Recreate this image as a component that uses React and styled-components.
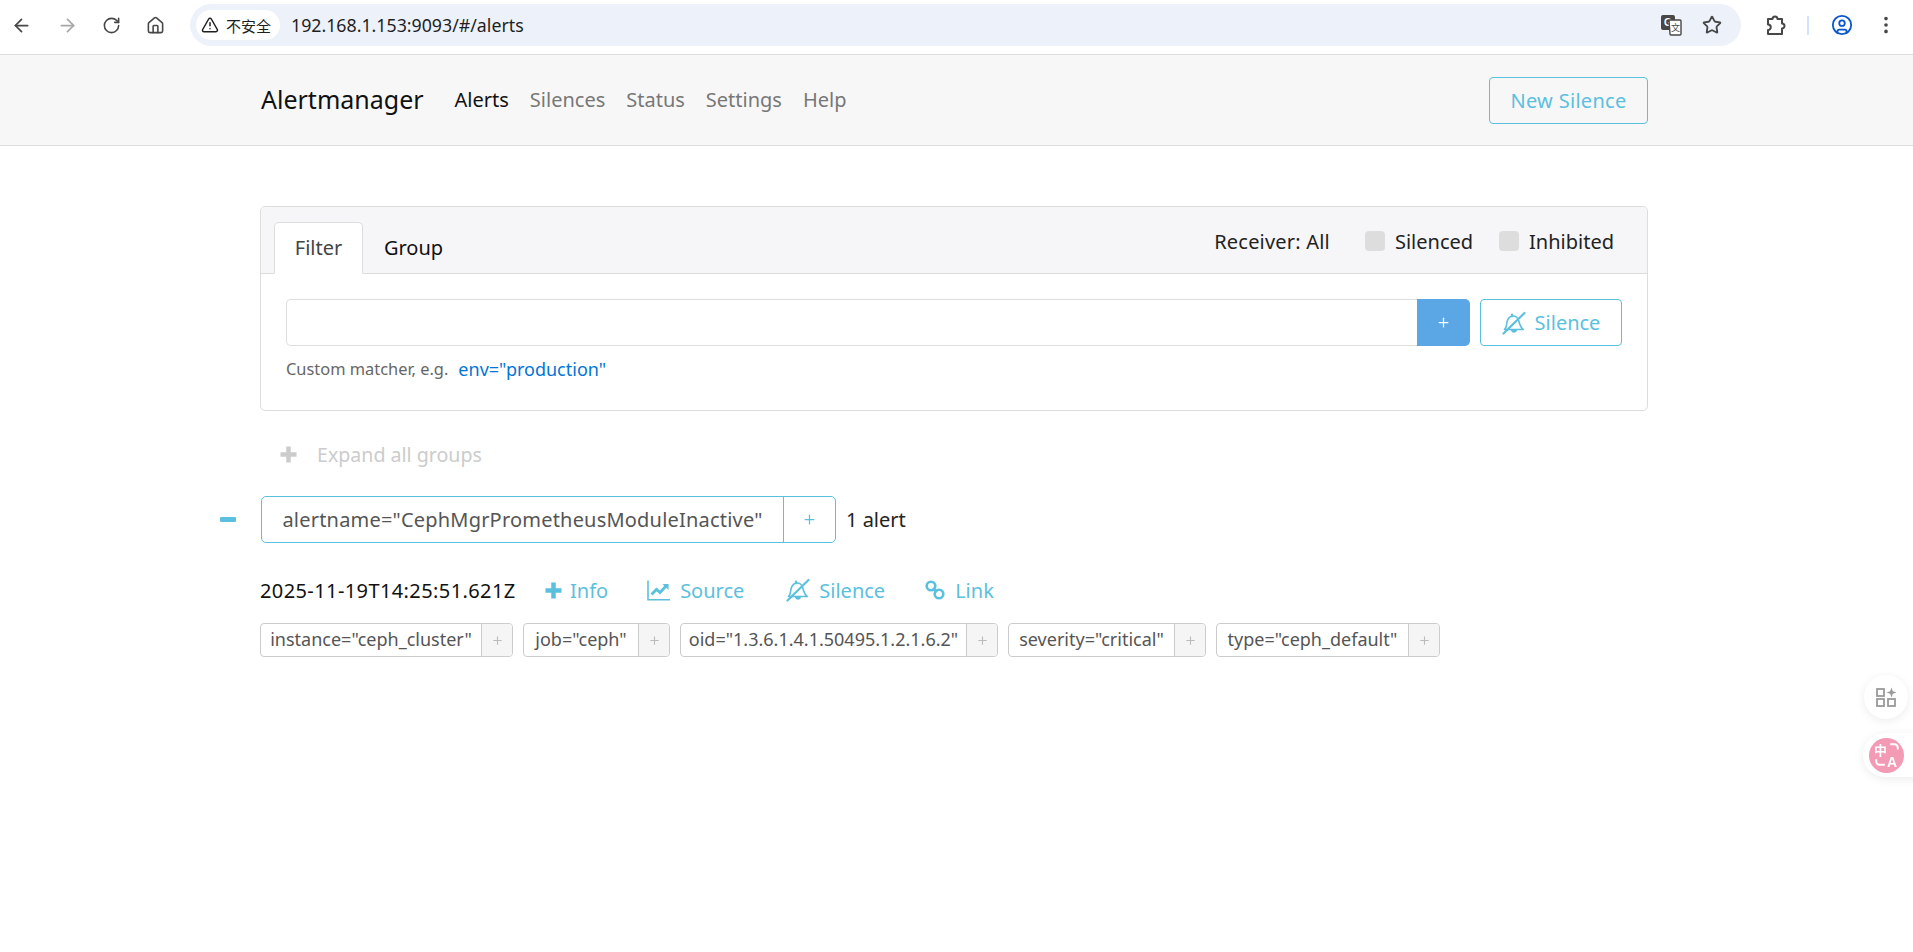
import React from 'react'
import styled, { createGlobalStyle } from 'styled-components'
import { ArrowLeft, ArrowRight, RotateCw, House, Star, CircleUser, EllipsisVertical, TriangleAlert, Plus } from 'lucide-react'

const GlobalStyle = createGlobalStyle`
    html, body {
        margin: 0;
        padding: 0;
        background: #fff;
        font-family: 'Noto Sans', 'Noto Sans CJK SC', sans-serif;
        font-size: 20px;
        color: #212529;
    }
`

const Page = styled.div`
    width: 1913px;
    height: 952px;
    overflow: hidden;
`

const BrowserBar = styled.div`
    display: flex;
    align-items: center;
    height: 55px;
    padding-bottom: 4px;
    box-sizing: border-box;
    border-bottom: 1px solid #dcdcdc;
`

const NavIcons = styled.div`
    display: flex;
    align-items: center;
    justify-content: space-between;
    width: 154px;
    margin-left: 11px;
    margin-right: 25px;
`

const AddressBar = styled.div`
    display: flex;
    align-items: center;
    width: 1551px;
    height: 42px;
    background: #edf2fa;
    border-radius: 21px;
    padding-left: 6px;
    box-sizing: border-box;
`

const SecurityChip = styled.div`
    display: flex;
    align-items: center;
    gap: 7px;
    width: 84px;
    height: 30px;
    padding-left: 5px;
    box-sizing: border-box;
    background: #fff;
    border-radius: 15px;
    font-family: 'Noto Sans CJK SC', sans-serif;
    font-size: 15px;
    color: #1f1f1f;
`

const Url = styled.div`
    margin-left: 11px;
    flex: 1;
    font-size: 17.75px;
    color: #1f1f1f;
`

const AddressActions = styled.div`
    display: flex;
    align-items: center;
    gap: 20px;
    margin-right: 19px;
`

const BrowserActions = styled.div`
    display: flex;
    align-items: center;
    margin-left: 24px;
`

const Divider = styled.div`
    width: 2px;
    height: 19px;
    background: #d3e3fd;
    margin: 0 22px 0 20px;
`

const MenuDots = styled.div`
    display: flex;
    margin-left: 22px;
`

const Navbar = styled.nav`
    display: flex;
    align-items: center;
    height: 90px;
    padding: 0 265px 0 261px;
    background: #f7f7f7;
    border-bottom: 1px solid #dcdcdc;
`

const Brand = styled.div`
    font-size: 25px;
    color: #111;
    margin-right: 31px;
    padding-bottom: 2px;
`

const NavItem = styled.div`
    margin-right: 21px;
    padding-bottom: 2px;
    color: ${p => (p.$active ? '#111' : '#777')};
`

const NewSilence = styled.div`
    margin-left: auto;
    width: 159px;
    height: 47px;
    display: flex;
    align-items: center;
    justify-content: center;
    box-sizing: border-box;
    border: 1px solid #5bc0de;
    border-radius: 4px;
    color: #5bc0de;
    letter-spacing: 0.3px;
`

const Main = styled.main`
    padding: 60px 265px 0 260px;
`

const Card = styled.section`
    height: 205px;
    box-sizing: border-box;
    border: 1px solid #ddd;
    border-radius: 5px;
`

const CardHeader = styled.div`
    display: flex;
    align-items: flex-end;
    height: 67px;
    box-sizing: border-box;
    padding-left: 13px;
    background: #f6f6f8;
    border-bottom: 1px solid #ddd;
    border-radius: 5px 5px 0 0;
`

const Tab = styled.div`
    display: flex;
    align-items: center;
    justify-content: center;
    box-sizing: border-box;
    height: 52px;
    width: ${p => p.$width}px;
    margin-bottom: -1px;
    padding-bottom: 1px;
    color: ${p => (p.$active ? '#444' : '#111')};
    ${p => p.$active && `
        background: #fff;
        border: 1px solid #ddd;
        border-bottom: 1px solid #fff;
        border-radius: 5px 5px 0 0;
    `}
`

const HeaderRight = styled.div`
    display: flex;
    align-items: center;
    align-self: center;
    margin-left: auto;
    margin-right: 33px;
    padding-top: 2px;
`

const Receiver = styled.div`
    margin-right: 35px;
    color: #222;
    letter-spacing: 0.2px;
`

const CheckLabel = styled.label`
    display: flex;
    align-items: center;
    gap: 10px;
    margin-left: ${p => p.$gap || 0}px;
    color: #222;
`

const CheckBox = styled.span`
    width: 20px;
    height: 20px;
    background: #ddd;
    border-radius: 4px;
`

const CardBody = styled.div`
    padding: 25px 25px 0 25px;
`

const FilterRow = styled.div`
    display: flex;
    height: 47px;
`

const FilterInput = styled.div`
    flex: 1;
    box-sizing: border-box;
    background: #fff;
    border: 1px solid #ddd;
    border-right: 0;
    border-radius: 5px 0 0 5px;
`

const AddButton = styled.div`
    display: flex;
    align-items: center;
    justify-content: center;
    width: 53px;
    background: #5ba7e5;
    border-radius: 0 5px 5px 0;
    color: #fff;
`

const SilenceButton = styled.div`
    display: flex;
    align-items: center;
    justify-content: center;
    gap: 9px;
    width: 142px;
    margin-left: 10px;
    box-sizing: border-box;
    border: 1px solid #5bc0de;
    border-radius: 4px;
    color: #5bc0de;
`

const Hint = styled.div`
    display: flex;
    align-items: center;
    gap: 10px;
    margin-top: 10px;
    height: 25px;
    font-size: 16.4px;
    color: #666;
`

const HintLink = styled.span`
    color: #0275d8;
    font-size: 18px;
`

const ExpandAll = styled.div`
    display: flex;
    align-items: center;
    gap: 20px;
    height: 30px;
    margin: 28px 0 27px 20px;
    font-size: 19.6px;
    color: #ccc;
`

const GroupRow = styled.div`
    display: flex;
    align-items: center;
    margin-left: -52px;
    height: 47px;
`

const GroupToggle = styled.div`
    display: flex;
    align-items: center;
    justify-content: center;
    box-sizing: border-box;
    width: 53px;
    padding-right: 13px;
    color: #5bc0de;
`

const GroupPill = styled.div`
    display: flex;
    height: 47px;
    width: 575px;
    box-sizing: border-box;
    border: 1px solid #5bc0de;
    border-radius: 5px;
    color: #555;
`

const GroupName = styled.div`
    display: flex;
    align-items: center;
    justify-content: center;
    width: 521px;
    box-sizing: border-box;
    white-space: nowrap;
    letter-spacing: 0.2px;
`

const GroupAdd = styled.div`
    flex: 1;
    display: flex;
    align-items: center;
    justify-content: center;
    border-left: 1px solid #5bc0de;
`

const AlertCount = styled.div`
    margin-left: 10px;
    color: #222;
`

const AlertRow = styled.div`
    display: flex;
    align-items: center;
    height: 30px;
    margin-top: 32px;
`

const Timestamp = styled.div`
    width: 255px;
    color: #111;
    white-space: nowrap;
    letter-spacing: 0.4px;
`

const ActionLink = styled.div`
    display: flex;
    align-items: center;
    gap: ${p => p.$gap}px;
    margin-left: ${p => p.$left}px;
    color: #5bc0de;
`

const LabelRow = styled.div`
    display: flex;
    gap: 10px;
    margin-top: 18px;
`

const Label = styled.div`
    display: flex;
    height: 34px;
    box-sizing: border-box;
    border: 1px solid #ccc;
    border-radius: 4px;
    font-size: 18px;
    color: #555;
`

const LabelText = styled.div`
    display: flex;
    align-items: center;
    justify-content: center;
    padding-bottom: 2px;
    box-sizing: border-box;
    width: ${p => p.$width}px;
    white-space: nowrap;
`

const LabelAdd = styled.div`
    display: flex;
    align-items: center;
    justify-content: center;
    width: 30px;
    background: #f5f5f5;
    border-left: 1px solid #ccc;
    border-radius: 0 3px 3px 0;
    color: #bbb;
`

const FloatCircle = styled.div`
    position: fixed;
    left: 1864px;
    top: ${p => p.$top}px;
    width: 44px;
    height: 44px;
    display: flex;
    align-items: center;
    justify-content: center;
    background: #fff;
    border-radius: 50%;
    box-shadow: 0 2px 10px rgba(0, 0, 0, 0.08);
`

const FloatPill = styled.div`
    position: fixed;
    left: 1863px;
    top: 733px;
    width: 60px;
    height: 44px;
    padding-left: 6px;
    box-sizing: border-box;
    display: flex;
    align-items: center;
    background: #fff;
    border-radius: 22px 0 0 22px;
    box-shadow: 0 2px 10px rgba(0, 0, 0, 0.08);
`

const TranslateBadge = styled.div`
    width: 35px;
    height: 35px;
    display: flex;
    align-items: center;
    justify-content: center;
    border-radius: 50%;
    background: #f39ab5;
`

const TranslateIcon = () => (
    <svg width="22" height="22" viewBox="0 0 22 22">
        <rect x="1" y="1" width="14" height="15" rx="2" fill="#474747" />
        <text x="4" y="12" fontSize="10" fontWeight="700" fontFamily="Liberation Sans" fill="#fff">G</text>
        <path d="M9 6h11a1 1 0 0 1 1 1v13a1 1 0 0 1-1 1H11a1 1 0 0 1-1-1z" fill="#fff" stroke="#474747" strokeWidth="1.4" />
        <text x="11" y="17" fontSize="9" fontFamily="Noto Sans CJK SC" fill="#474747">文</text>
    </svg>
)

const PuzzleIcon = () => (
    <svg width="22" height="24" viewBox="0 0 22 24" fill="none" stroke="#474747" strokeWidth="2" strokeLinejoin="round">
        <path d="M3 6h4.500a2.500 2.500 0 0 1 5 0H17v4.500a2.500 2.500 0 0 1 0 5V21H3v-4a2.600 2.600 0 0 0 0-5.500z" />
    </svg>
)

const AppsIcon = () => (
    <svg width="22" height="22" viewBox="0 0 22 22" fill="none" stroke="#9a9a9a" strokeWidth="1.8">
        <rect x="2" y="3" width="7" height="7" />
        <rect x="2" y="13" width="7" height="7" />
        <rect x="13" y="13" width="7" height="7" />
        <path d="M16.500 1.500l1.300 3.700 3.700 1.300-3.700 1.300-1.300 3.700-1.300-3.700-3.700-1.300 3.700-1.300z" fill="#9a9a9a" stroke="none" />
    </svg>
)

const LangIcon = () => (
    <svg width="28" height="28" viewBox="0 0 26 26" fill="none" stroke="#fff" strokeWidth="1.8">
        <text x="1" y="13" fontSize="12" fontWeight="700" fontFamily="Noto Sans CJK SC" fill="#fff" stroke="none">中</text>
        <text x="13" y="24" fontSize="13" fontWeight="700" fontFamily="Liberation Sans" fill="#fff" stroke="none">A</text>
        <path d="M16 3h4a3 3 0 0 1 3 3v2" />
        <path d="M3 17v2a3 3 0 0 0 3 3h5" />
    </svg>
)

const BoldPlus = () => (
    <svg width="17" height="17" viewBox="0 0 17 17" stroke="currentColor" strokeWidth="4.500">
        <path d="M8.500 0.500v16M0.500 8.500h16" />
    </svg>
)

const BoldMinus = () => (
    <svg width="16" height="5" viewBox="0 0 16 5">
        <rect width="16" height="5" rx="1" fill="currentColor" />
    </svg>
)

const BellOff = () => (
    <svg width="24" height="24" viewBox="0 0 24 24" fill="none" stroke="currentColor" strokeWidth="1.6" strokeLinejoin="round">
        <path d="M2.500 18.500c2-2 2-4 2.500-7.500 .6-3.500 3.300-6 6-6s5 1.800 5.800 5c.8 3.500 2 6.500 4.500 8.500z" />
        <path d="M10 3.500v1.800" strokeWidth="2.200" strokeLinecap="round" />
        <path d="M9.800 19.500a2.400 2.400 0 0 0 4.400 0z" fill="currentColor" />
        <path d="M1.500 22.500L22.500 2" strokeWidth="2.200" strokeLinecap="round" />
    </svg>
)

const ChartIcon = () => (
    <svg width="23" height="21" viewBox="0 0 23 21" fill="none" stroke="currentColor">
        <path d="M1 0.500V19.700H23" strokeWidth="1.600" />
        <path d="M4.500 14.500l5-5 3.500 3 6-6.500" strokeWidth="2.800" />
        <path d="M15.500 4h6v6z" fill="currentColor" stroke="none" />
    </svg>
)

const LinkIcon = () => (
    <svg width="20" height="20" viewBox="0 0 20 20" fill="none" stroke="currentColor" strokeWidth="2.600">
        <circle cx="6" cy="6" r="4.300" />
        <circle cx="14" cy="14" r="4.300" />
        <path d="M8 8l4 4" />
    </svg>
)

const labels = [
    { text: 'instance="ceph_cluster"', width: 220 },
    { text: 'job="ceph"', width: 114 },
    { text: 'oid="1.3.6.1.4.1.50495.1.2.1.6.2"', width: 285 },
    { text: 'severity="critical"', width: 165 },
    { text: 'type="ceph_default"', width: 191 },
]

const App = () => {

    return (
        <Page>
            <GlobalStyle />
            <BrowserBar>
                <NavIcons>
                    <ArrowLeft size={21} color="#474747" />
                    <ArrowRight size={21} color="#a8a8a8" />
                    <RotateCw size={19} color="#474747" />
                    <House size={19} color="#474747" />
                </NavIcons>
                <AddressBar>
                    <SecurityChip><TriangleAlert size={18} color="#1f1f1f" />不安全</SecurityChip>
                    <Url>192.168.1.153:9093/#/alerts</Url>
                    <AddressActions>
                        <TranslateIcon />
                        <Star size={20} color="#474747" strokeWidth={2.2} />
                    </AddressActions>
                </AddressBar>
                <BrowserActions>
                    <PuzzleIcon />
                    <Divider />
                    <CircleUser size={22} color="#0b57d0" />
                    <MenuDots><EllipsisVertical size={22} color="#474747" /></MenuDots>
                </BrowserActions>
            </BrowserBar>

            <Navbar>
                <Brand>Alertmanager</Brand>
                <NavItem $active>Alerts</NavItem>
                <NavItem>Silences</NavItem>
                <NavItem>Status</NavItem>
                <NavItem>Settings</NavItem>
                <NavItem>Help</NavItem>
                <NewSilence>New Silence</NewSilence>
            </Navbar>

            <Main>
                <Card>
                    <CardHeader>
                        <Tab $active $width={89}>Filter</Tab>
                        <Tab $width={101}>Group</Tab>
                        <HeaderRight>
                            <Receiver>Receiver: All</Receiver>
                            <CheckLabel><CheckBox />Silenced</CheckLabel>
                            <CheckLabel $gap={26}><CheckBox />Inhibited</CheckLabel>
                        </HeaderRight>
                    </CardHeader>
                    <CardBody>
                        <FilterRow>
                            <FilterInput />
                            <AddButton><Plus size={15} /></AddButton>
                            <SilenceButton><BellOff />Silence</SilenceButton>
                        </FilterRow>
                        <Hint>Custom matcher, e.g.<HintLink>env="production"</HintLink></Hint>
                    </CardBody>
                </Card>

                <ExpandAll><BoldPlus />Expand all groups</ExpandAll>

                <GroupRow>
                    <GroupToggle><BoldMinus /></GroupToggle>
                    <GroupPill>
                        <GroupName>alertname="CephMgrPrometheusModuleInactive"</GroupName>
                        <GroupAdd><Plus size={15} color="#5bc0de" /></GroupAdd>
                    </GroupPill>
                    <AlertCount>1 alert</AlertCount>
                </GroupRow>

                <AlertRow>
                    <Timestamp>2025-11-19T14:25:51.621Z</Timestamp>
                    <ActionLink $left={30} $gap={8}><BoldPlus />Info</ActionLink>
                    <ActionLink $left={39} $gap={10}><ChartIcon />Source</ActionLink>
                    <ActionLink $left={42} $gap={9}><BellOff />Silence</ActionLink>
                    <ActionLink $left={40} $gap={10}><LinkIcon />Link</ActionLink>
                </AlertRow>

                <LabelRow>
                    {labels.map(item => (
                        <Label key={item.text}>
                            <LabelText $width={item.width}>{item.text}</LabelText>
                            <LabelAdd><Plus size={13} /></LabelAdd>
                        </Label>
                    ))}
                </LabelRow>
            </Main>

            <FloatCircle $top={675}><AppsIcon /></FloatCircle>
            <FloatPill><TranslateBadge><LangIcon /></TranslateBadge></FloatPill>
        </Page>
    )

}

export default App
